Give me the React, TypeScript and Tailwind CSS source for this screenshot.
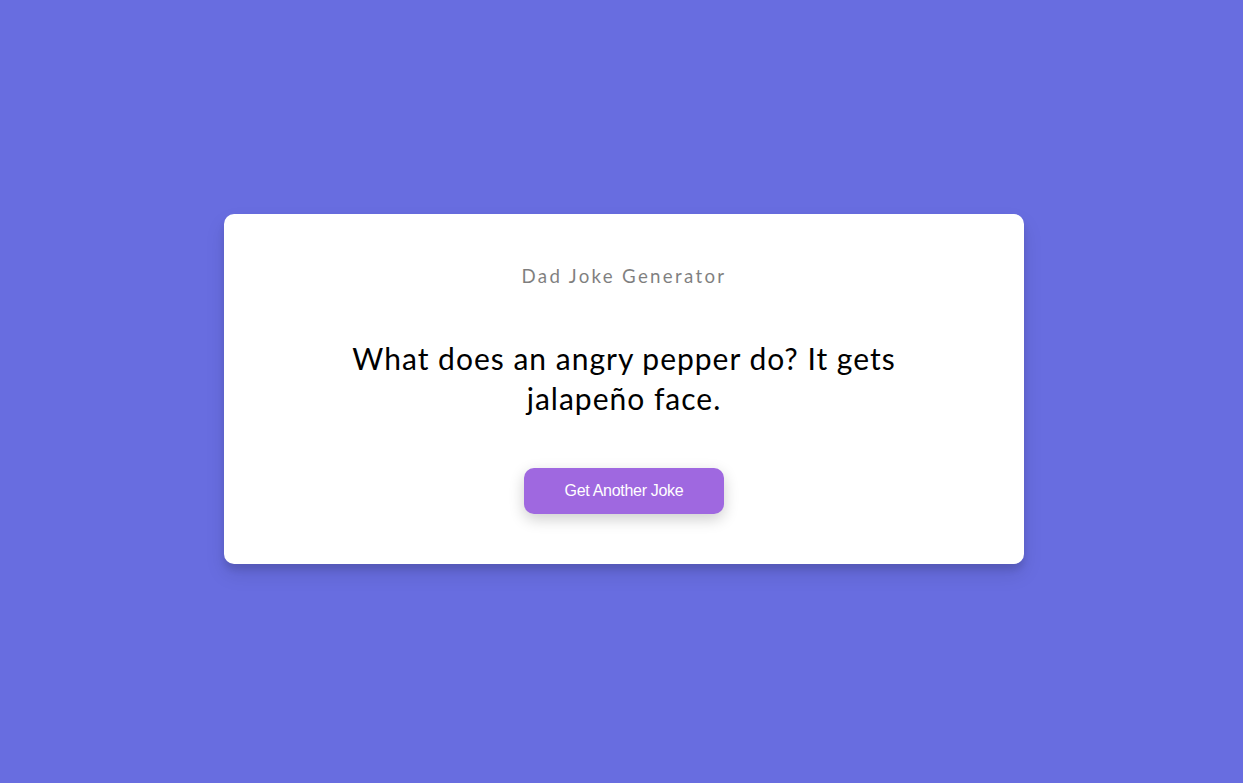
export default function App() {
  return (
    <div className="min-h-screen w-full bg-[#686de0] flex items-center justify-center pl-[25px] pr-5 pt-5 pb-[26px]" style={{ fontFamily: 'Lato, "Noto Sans", sans-serif' }}>
      <div className="w-[800px] max-w-full bg-white rounded-[10px] px-5 py-[50px] text-center shadow-[0_10px_20px_rgba(0,0,0,0.1),0_6px_6px_rgba(0,0,0,0.1)]">
        <h3 className="m-0 text-[18.72px] leading-[24px] font-normal tracking-[2.3px] text-black opacity-50">Dad Joke Generator</h3>
        <div className="mx-auto my-[50px] max-w-[600px] text-[30px] leading-[40px] tracking-[1px] text-black">
          What does an angry pepper do? It gets jalapeño face.
        </div>
        <button className="bg-[#9f68e0] text-white border-0 rounded-[10px] px-0 py-[14px] text-[16px] leading-[18px] tracking-[-0.3px] whitespace-nowrap w-[200px] shadow-[0_5px_15px_rgba(0,0,0,0.2)]" style={{ fontFamily: '"Liberation Sans", Arial, sans-serif' }}>
          Get Another Joke
        </button>
      </div>
    </div>
  );
}
